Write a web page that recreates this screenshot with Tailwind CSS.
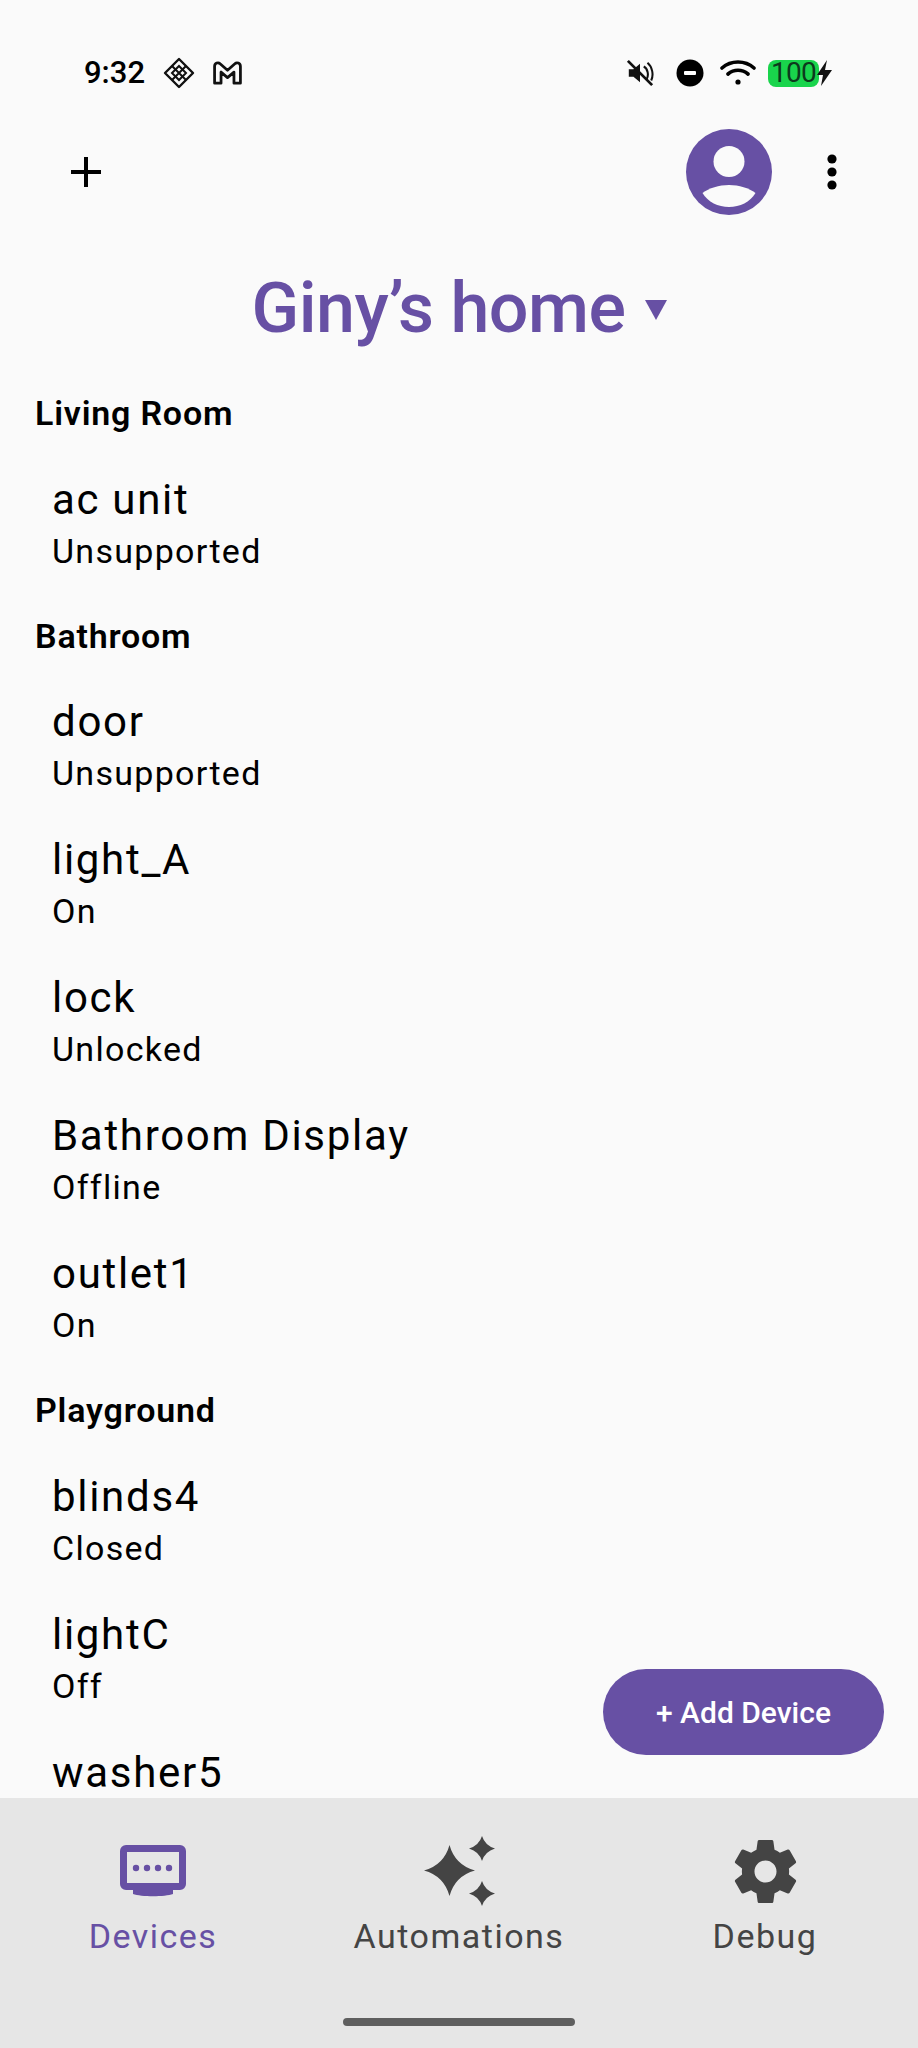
<!DOCTYPE html>
<html lang="en">
<head>
  <meta charset="UTF-8" />
  <meta name="viewport" content="width=device-width, initial-scale=1.0" />
  <title>Giny's home</title>
  <script src="https://cdn.jsdelivr.net/npm/@tailwindcss/browser@4"></script>
</head>
<body class="bg-[#fafafa] font-[Roboto,sans-serif] text-black">
  <div class="relative flex h-[2048px] w-[918px] flex-col overflow-hidden">

    <!-- Status bar -->
    <div class="flex h-[92px] shrink-0 items-end justify-between pl-[84px] pr-[85px]">
      <div class="flex h-[38px] items-center">
        <span class="text-[31px] leading-[38px] font-medium">9:32</span>
        <svg class="ml-[18px]" width="32" height="32" viewBox="0 0 32 32" fill="none" stroke="#111" stroke-width="2.4"><path d="M16 2 30 16 16 30 2 16Z" stroke-linejoin="round"/><path d="M16 9 23 16 16 23 9 16Z" stroke-width="2"/><path d="M9 9 23 23M23 9 9 23" stroke-width="2"/></svg>
        <svg class="ml-[17px]" width="31" height="24" viewBox="0 0 32 26" fill="none" stroke="#111" stroke-width="3" stroke-linejoin="round"><path d="M2 6c0-4 4-5 6-3l8 7 8-7c2-2 6-1 6 3v18h-7V12l-7 6-7-6v12H2Z"/></svg>
      </div>
      <div class="flex h-[38px] items-center">
        <svg width="28" height="28" viewBox="0 0 30 30"><path d="M3 11h5l7-6v20l-7-6H3Z" fill="#111"/><path d="M19 8c4 2 6 9 3 14M23 4c5 4 7 13 4 19" fill="none" stroke="#111" stroke-width="2.2"/><path d="M2 2 28 28" stroke="#111" stroke-width="3"/></svg>
        <svg class="ml-[22px]" width="28" height="28" viewBox="0 0 28 28"><circle cx="14" cy="14" r="13.5" fill="#000"/><rect x="8" y="12" width="12" height="4" rx="1" fill="#fff"/></svg>
        <svg class="ml-[16px]" width="36" height="28" viewBox="0 0 36 28" fill="none" stroke="#000" stroke-width="3.6" stroke-linecap="round"><path d="M2 9c9-8 23-8 32 0M8 15c6-5 14-5 20 0"/><circle cx="18" cy="23" r="2.6" fill="#000" stroke="none"/></svg>
        <div class="ml-[12px] flex h-[27px] w-[51px] items-center justify-center rounded-[8px] bg-[#19d44c] text-[28px] leading-none tracking-[-0.8px] text-[#0d3a1c]">100</div>
        <svg class="-ml-[3px]" width="17" height="26" viewBox="0 0 17 26"><path d="M11 0 1 15h6l-2 11 11-16h-7Z" fill="#111"/></svg>
      </div>
    </div>

    <!-- Top bar -->
    <div class="flex h-[160px] shrink-0 items-center justify-between pl-[70px] pr-[81px]">
      <svg width="32" height="32" viewBox="0 0 32 32"><path d="M14 1h4v13h13v4H18v13h-4V18H1v-4h13Z" fill="#000"/></svg>
      <div class="flex items-center gap-[55px]">
        <svg width="86" height="86" viewBox="0 0 86 86">
          <circle cx="43" cy="43" r="43" fill="#6750a4"/>
          <circle cx="43" cy="32.500" r="15.500" fill="#fafafa"/>
          <path d="M16.500 64C23 59 33 56 43 56s20 3 26.500 8C64 73 54 78 43 78S22 73 16.500 64Z" fill="#fafafa"/>
        </svg>
        <svg width="10" height="36" viewBox="0 0 10 36"><circle cx="5" cy="5" r="4.6"/><circle cx="5" cy="18" r="4.6"/><circle cx="5" cy="31" r="4.6"/></svg>
      </div>
    </div>

    <!-- Home title -->
    <div class="flex h-[112px] shrink-0 items-center justify-center text-[#6750a4]">
      <span class="text-[70px] leading-none font-medium tracking-[-0.5px]">Giny’s home</span>
      <svg class="ml-[19px] mt-[4px]" width="22" height="20" viewBox="0 0 22 20"><path d="M0 0h22L11 20Z" fill="#6750a4"/></svg>
    </div>

    <!-- Device list -->
    <div class="min-h-0 flex-1 overflow-hidden">
      <h2 class="mt-[27px] pl-[35px] text-[34px] leading-[44px] font-semibold tracking-[0.8px]">Living Room</h2>
      <div class="mt-[36px] pl-[52px]">
        <p class="text-[42px] leading-[58px] tracking-[1.7px]">ac unit</p>
        <p class="text-[34px] leading-[44px] tracking-[1.3px]">Unsupported</p>
      </div>
      <h2 class="mt-[41px] pl-[35px] text-[34px] leading-[44px] font-semibold tracking-[0.8px]">Bathroom</h2>
      <div class="mt-[35px] flex flex-col gap-[36px] pl-[52px]">
        <div>
          <p class="text-[42px] leading-[58px] tracking-[1.7px]">door</p>
          <p class="text-[34px] leading-[44px] tracking-[1.3px]">Unsupported</p>
        </div>
        <div>
          <p class="text-[42px] leading-[58px] tracking-[1.7px]">light_A</p>
          <p class="text-[34px] leading-[44px] tracking-[1.3px]">On</p>
        </div>
        <div>
          <p class="text-[42px] leading-[58px] tracking-[1.7px]">lock</p>
          <p class="text-[34px] leading-[44px] tracking-[1.3px]">Unlocked</p>
        </div>
        <div>
          <p class="text-[42px] leading-[58px] tracking-[1.7px]">Bathroom Display</p>
          <p class="text-[34px] leading-[44px] tracking-[1.3px]">Offline</p>
        </div>
        <div>
          <p class="text-[42px] leading-[58px] tracking-[1.7px]">outlet1</p>
          <p class="text-[34px] leading-[44px] tracking-[1.3px]">On</p>
        </div>
      </div>
      <h2 class="mt-[41px] pl-[35px] text-[34px] leading-[44px] font-semibold tracking-[0.8px]">Playground</h2>
      <div class="mt-[36px] flex flex-col gap-[36px] pl-[52px]">
        <div>
          <p class="text-[42px] leading-[58px] tracking-[1.7px]">blinds4</p>
          <p class="text-[34px] leading-[44px] tracking-[1.3px]">Closed</p>
        </div>
        <div>
          <p class="text-[42px] leading-[58px] tracking-[1.7px]">lightC</p>
          <p class="text-[34px] leading-[44px] tracking-[1.3px]">Off</p>
        </div>
        <div>
          <p class="text-[42px] leading-[58px] tracking-[1.7px]">washer5</p>
        </div>
      </div>
    </div>

    <!-- Add device button -->
    <button class="absolute left-[603px] top-[1669px] h-[86px] w-[281px] rounded-full bg-[#6750a4] text-[30px] font-medium text-white">+ Add Device</button>

    <!-- Bottom nav -->
    <nav class="relative flex h-[250px] shrink-0 bg-[#e6e6e6] pt-[30px] text-[#444]">
      <div class="flex w-[306px] flex-col items-center text-[#6750a4]">
        <div class="flex h-[86px] items-center">
          <svg width="66" height="52" viewBox="0 0 66 52">
            <path d="M6 0h54a6 6 0 0 1 6 6v33a6 6 0 0 1-6 6H6a6 6 0 0 1-6-6V6a6 6 0 0 1 6-6Zm1 7v31h52V7Z" fill="#6750a4" fill-rule="evenodd"/>
            <path d="M13 44h40v5c-8 3-32 3-40 0Z" fill="#6750a4"/>
            <circle cx="16" cy="23" r="3.2" fill="#6750a4"/><circle cx="27" cy="23" r="3.2" fill="#6750a4"/><circle cx="38" cy="23" r="3.2" fill="#6750a4"/><circle cx="49" cy="23" r="3.2" fill="#6750a4"/>
          </svg>
        </div>
        <span class="mt-[1px] text-[34px] leading-[42px] tracking-[1.5px]">Devices</span>
      </div>
      <div class="flex w-[306px] flex-col items-center">
        <div class="flex h-[86px] items-center">
          <svg width="71" height="70" viewBox="0 0 71 70" fill="#444">
            <path d="M25.500 9Q31 29 51 34.500 31 40 25.500 60 20 40 0 34.500 20 29 25.500 9Z"/>
            <path d="M58 0Q61 9.500 71 12.500 61 15.500 58 25 55 15.500 45 12.500 55 9.500 58 0Z"/>
            <path d="M58 45Q61 54.500 71 57.500 61 60.500 58 70 55 60.500 45 57.500 55 54.500 58 45Z"/>
          </svg>
        </div>
        <span class="mt-[1px] text-[34px] leading-[42px] tracking-[1.5px]">Automations</span>
      </div>
      <div class="flex w-[306px] flex-col items-center">
        <div class="flex h-[86px] items-center">
          <svg width="63" height="63" viewBox="2 2 20 20" fill="#444"><path d="M19.430 12.980c.040-.320.070-.640.070-.980s-.030-.660-.070-.980l2.110-1.650c.190-.150.240-.420.120-.640l-2-3.460c-.120-.220-.390-.300-.610-.220l-2.490 1c-.520-.400-1.080-.730-1.690-.980l-.380-2.650C14.460 2.180 14.250 2 14 2h-4c-.250 0-.460.180-.490.420l-.380 2.650c-.610.250-1.170.590-1.690.980l-2.490-1c-.230-.090-.490 0-.610.220l-2 3.460c-.130.220-.070.490.120.640l2.110 1.650c-.040.320-.070.650-.070.980s.030.660.070.980l-2.110 1.650c-.190.150-.240.420-.120.640l2 3.460c.120.220.390.300.610.220l2.490-1c.520.400 1.080.730 1.690.980l.380 2.650c.030.240.240.420.490.420h4c.250 0 .460-.180.490-.420l.380-2.650c.610-.250 1.170-.590 1.690-.980l2.490 1c.230.090.490 0 .610-.220l2-3.460c.120-.220.070-.490-.120-.640l-2.110-1.650ZM12 15.500c-1.930 0-3.500-1.570-3.500-3.500s1.570-3.500 3.500-3.500 3.500 1.570 3.500 3.500-1.570 3.500-3.500 3.500Z"/></svg>
        </div>
        <span class="mt-[1px] text-[34px] leading-[42px] tracking-[1.5px]">Debug</span>
      </div>
      <div class="absolute left-[343px] top-[220px] h-[8px] w-[232px] rounded-full bg-[#5f5f5f]"></div>
    </nav>
  </div>
</body>
</html>
